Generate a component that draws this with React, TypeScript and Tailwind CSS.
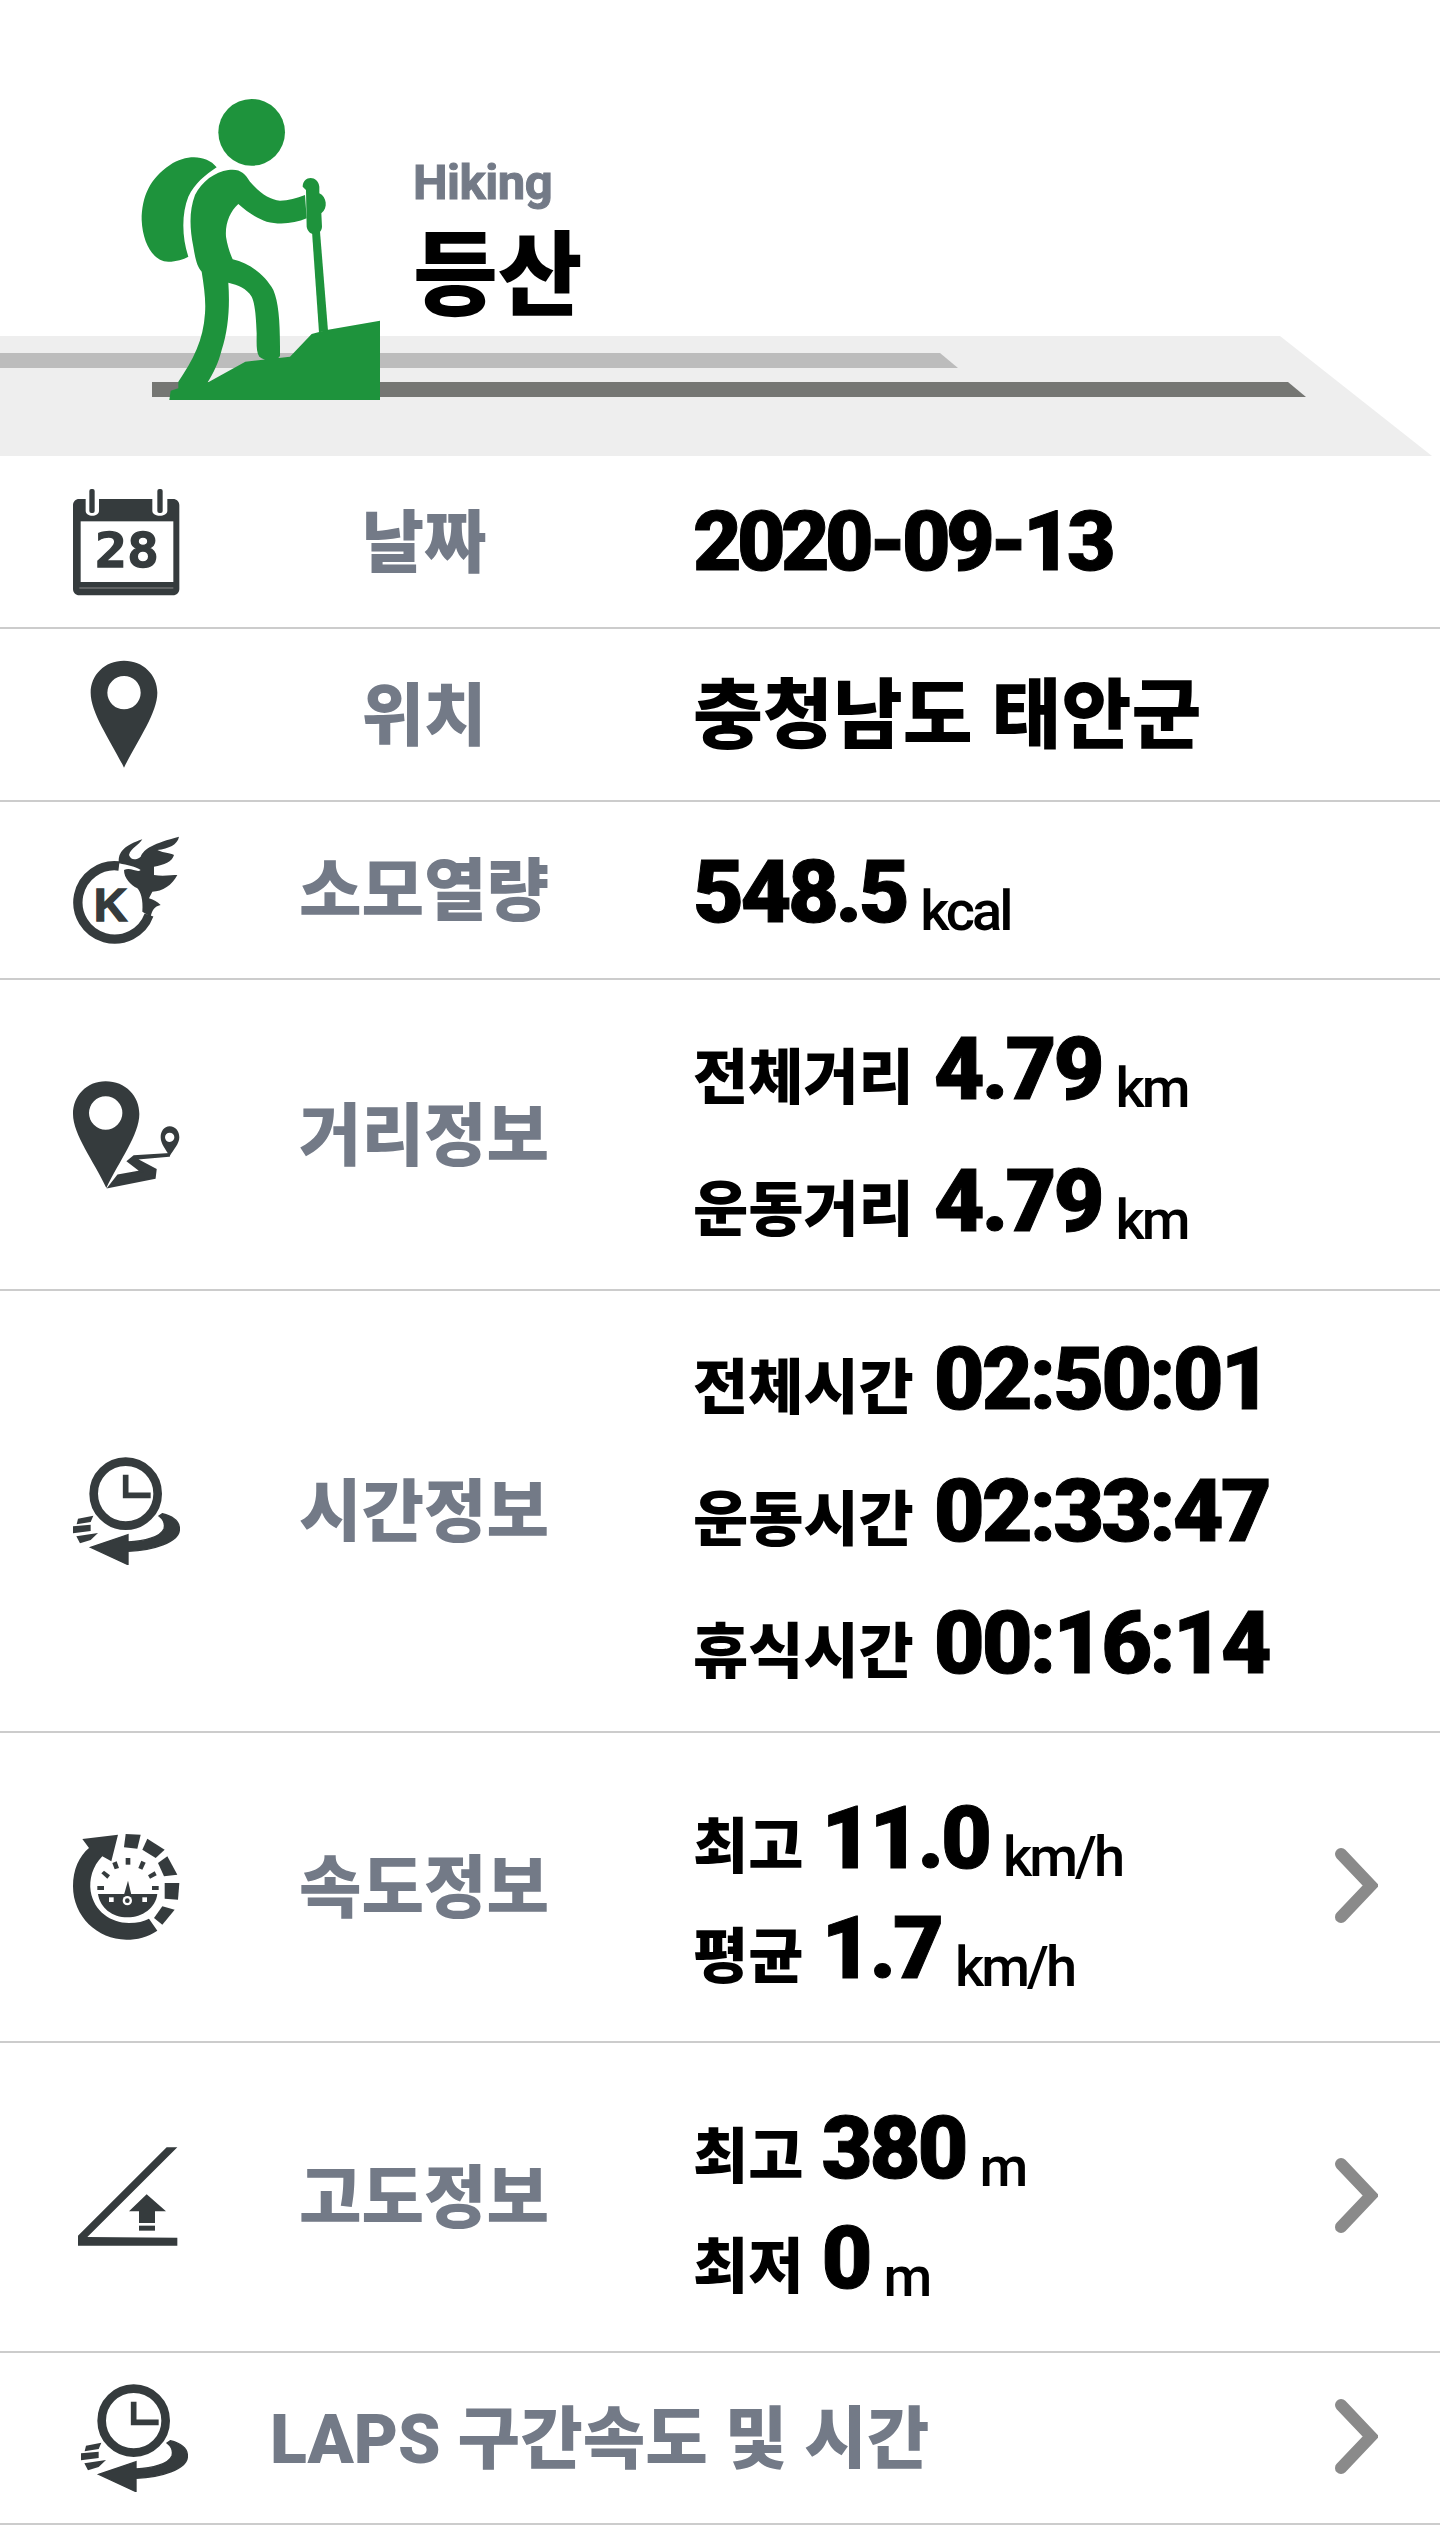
import React from "react";

const FONT = "font-['Roboto','Noto_Sans_CJK_KR',sans-serif]";
const INK = "#353b3d";

function Hiker() {
  return (
    <svg width="280" height="340" viewBox="0 0 840 1020" className="shrink-0 block">
      <g fill="#1e933c">
        <circle cx="455" cy="157" r="100" />
        <path d="M350,262 C320,225 260,222 210,255 C150,295 125,350 125,420 C128,490 160,545 205,545 C230,545 250,538 265,530 C245,470 245,400 265,350 C285,310 315,285 350,262 Z" />
        <path d="M385,270 C420,265 435,280 450,305 C480,340 510,360 540,362 C565,362 590,355 615,345 L620,415 C585,430 540,435 500,425 C470,415 440,395 415,372 C390,395 375,430 378,470 C382,495 390,520 398,538 C450,550 495,585 520,630 C535,665 540,720 540,800 L540,828 C530,845 495,845 478,830 C468,815 470,790 470,760 C468,710 465,670 455,650 C440,625 415,615 385,608 C390,680 385,750 365,810 C355,850 340,880 322,908 L436,845 L570,830 L635,762 L680,750 L840,722 L840,960 L208,960 L212,932 L235,925 L235,905 C280,840 310,780 315,700 C318,660 312,620 305,575 C290,560 285,530 280,500 C268,440 268,390 285,345 C305,305 345,275 385,270 Z" />
        <path d="M636,455 L660,455 L684,752 L657,757 Z" />
        <path d="M608,320 C608,285 655,285 658,320 L658,340 C680,350 685,385 664,400 L666,440 C664,470 625,470 620,440 L618,330 Z" />
      </g>
    </svg>
  );
}

function Band() {
  return (
    <svg width="1440" height="120" viewBox="0 336 1440 120" className="absolute left-0 top-[336px] block">
      <polygon points="0,336 1280,336 1432,456 0,456" fill="#eeeeee" />
      <polygon points="0,353 940,353 958,368 0,368" fill="#bcbcbc" />
      <polygon points="152,382 1288,382 1306,397 152,397" fill="#757673" />
    </svg>
  );
}

function CalendarIcon() {
  return (
    <svg width="108" height="108" viewBox="94 52 324 324" className="block">
      <path d="M115,85 H135 V120 C135,140 175,140 175,120 V85 H335 V120 C335,140 380,140 380,120 V85 H397 C408,85 416,93 416,104 V355 C416,366 408,374 397,374 H116 C105,374 97,366 97,355 V104 C97,93 105,85 115,85 Z" fill={INK} />
      <rect x="146" y="55" width="16" height="72" rx="6" fill={INK} />
      <rect x="350" y="55" width="16" height="72" rx="6" fill={INK} />
      <rect x="120" y="152" width="278" height="182" fill="#fff" />
      <rect x="116" y="350" width="282" height="4" fill="#777" />
      <text x="259" y="290" textAnchor="middle" fontFamily="'DejaVu Sans Mono',monospace" fontWeight="700" fontSize="146" fill={INK} stroke={INK} strokeWidth="4" textLength="192" lengthAdjust="spacingAndGlyphs">28</text>
    </svg>
  );
}

function PinIcon() {
  return (
    <svg width="108" height="110" viewBox="96 570 324 330" className="block">
      <path fillRule="evenodd" d="M252,572 C310,572 352,615 352,668 C352,730 290,815 252,893 C214,815 152,730 152,668 C152,615 194,572 252,572 Z M252,618 A50,50 0 1 0 252.1,718 A50,50 0 1 0 252,618 Z" fill={INK} />
    </svg>
  );
}

function KcalIcon() {
  return (
    <svg width="108" height="108" viewBox="94 48 324 324" className="block">
      <path d="M235,138 A110,110 0 1 0 325,285" fill="none" stroke={INK} strokeWidth="28" />
      <path d="M235,130 C230,95 255,75 305,58 C295,75 270,85 265,105 C270,120 285,122 300,110 C310,85 340,70 415,50 C410,75 385,85 350,90 C370,100 395,100 400,105 C395,125 370,135 340,140 L340,165 C365,170 395,165 410,165 C395,195 365,215 335,215 L325,235 C340,240 350,245 360,255 C340,260 335,270 330,290 L305,275 C308,240 300,215 290,205 C270,195 250,175 250,150 C270,140 290,160 300,150 C285,140 260,135 235,130 Z" fill={INK} />
      <text x="210" y="304" textAnchor="middle" fontFamily="'Liberation Sans',sans-serif" fontWeight="700" fontSize="140" fill={INK} stroke={INK} strokeWidth="4">K</text>
    </svg>
  );
}

function RouteIcon() {
  return (
    <svg width="108" height="110" viewBox="94 776 324 330" className="block">
      <path fillRule="evenodd" d="M195,780 C255,780 296,825 296,878 C296,940 235,1020 197,1100 C160,1020 97,940 97,878 C97,825 137,780 195,780 Z M195,825 A50,50 0 1 0 195.1,925 A50,50 0 1 0 195,825 Z" fill={INK} />
      <path fillRule="evenodd" d="M387,915 C405,915 416,930 416,948 C416,968 398,985 387,1005 C376,985 360,968 360,948 C360,930 370,915 387,915 Z M387,934 A14,14 0 1 0 387.1,962 A14,14 0 1 0 387,934 Z" fill={INK} />
      <path d="M385,1003 L283,1012 L345,1045 L342,1070 L205,1097 L232,1062 L302,1050 L262,1020 L280,1005 L385,998 Z" fill={INK} stroke={INK} strokeWidth="6" />
    </svg>
  );
}

function ClockIcon() {
  return (
    <svg width="108" height="108" viewBox="94 105 324 324" className="block">
      <circle cx="255" cy="215" r="96" fill="none" stroke={INK} strokeWidth="26" />
      <path d="M255,158 V220 H330" fill="none" stroke={INK} strokeWidth="17" />
      <path d="M365,275 C405,285 418,305 416,325 C412,360 340,385 262,388 L262,428 L150,376 L262,338 L262,360 C310,358 360,345 370,320 C374,305 368,292 355,282 Z" fill={INK} stroke={INK} strokeWidth="4" />
      <path d="M112,290 L158,281 L150,300 L108,307 Z M97,313 L150,308 L150,327 L97,334 Z M107,343 L172,333 L150,354 L118,364 Z" fill={INK} />
    </svg>
  );
}

function SpeedIcon() {
  return (
    <svg width="108" height="108" viewBox="94 65 324 324" className="block">
      <g fill={INK}>
        <path d="M125,83 L232,70 L212,150 L185,135 C155,165 145,205 150,240 C160,300 210,335 265,335 C290,335 310,330 325,322 L350,358 C320,378 290,385 257,385 C170,385 97,315 97,225 C97,175 115,135 145,110 Z" />
        <polygon points="255,68 300,70 290,112 250,108" />
        <polygon points="320,82 372,115 345,140 305,115" />
        <polygon points="380,135 410,190 370,195 352,155" />
        <polygon points="372,215 416,215 412,265 372,262" />
        <polygon points="365,285 402,295 365,340 340,320" />
        <path d="M172,248 L350,248 C345,290 305,318 260,318 C215,318 178,290 172,248 Z" />
        <polygon points="262,208 272,250 250,250" />
        <rect x="255" y="140" width="14" height="20" />
        <polygon points="215,155 228,150 235,170 222,174" />
        <polygon points="293,170 302,148 315,154 305,175" />
        <polygon points="182,186 190,178 208,192 200,202" />
        <polygon points="322,192 342,180 348,192 328,202" />
        <rect x="170" y="224" width="20" height="12" />
        <rect x="334" y="224" width="20" height="12" />
      </g>
      <rect x="205" y="258" width="14" height="14" fill="#fff" />
      <rect x="305" y="258" width="14" height="14" fill="#fff" />
      <circle cx="260" cy="268" r="14" fill="#fff" />
      <circle cx="260" cy="268" r="7" fill={INK} />
    </svg>
  );
}

function AltitudeIcon() {
  return (
    <svg width="108" height="108" viewBox="94 100 324 324" className="block">
      <g fill={INK}>
        <polygon points="378,113 410,113 140,382 410,384 410,408 112,408 112,378" />
        <polygon points="318,254 376,305 343,305 343,340 295,340 295,305 265,305" />
        <rect x="295" y="348" width="48" height="15" />
      </g>
    </svg>
  );
}

function Chevron() {
  return (
    <svg width="43" height="75" viewBox="0 0 43 75" className="block">
      <path d="M6,6 L36,37.5 L6,69" fill="none" stroke="#8a8a8a" strokeWidth="12" strokeLinecap="round" strokeLinejoin="miter" />
    </svg>
  );
}

function Row({ h, icon, label, children, arrow }: { h: string; icon: React.ReactNode; label: string; children: React.ReactNode; arrow?: boolean }) {
  return (
    <div className={`flex items-center border-b-2 border-[#cccccc] ${h}`}>
      <div className="w-[180px] pl-[72px] shrink-0">{icon}</div>
      <div className="w-[488px] shrink-0 pt-[4px] text-center text-[68px] font-black text-[#737a87] leading-none">{label}</div>
      <div className="ml-[25px] flex-1 flex flex-col">{children}</div>
      {arrow && <div className="mr-[62px] -mt-[4px] shrink-0"><Chevron /></div>}
    </div>
  );
}

function Line({ k, v, u, h, gap }: { k: string; v: string; u: string; h: string; gap: string }) {
  return (
    <div className={`flex items-baseline ${h}`}>
      <span className="text-[60px] font-black text-black leading-none">{k}</span>
      <span className={`${gap} text-[88px] font-black text-black leading-none tracking-[-3px] [-webkit-text-stroke:1px_black]`}>{v}</span>
      {u && <span className="ml-[14px] translate-y-[8px] text-[56px] font-medium text-black leading-none tracking-[-3px]">{u}</span>}
    </div>
  );
}

export default function App() {
  return (
    <div className={`w-[1440px] h-[2525px] bg-white overflow-hidden ${FONT}`}>
      <div className="relative h-[456px]">
        <Band />
        <div className="relative flex pl-[100px] pt-[80px]">
          <Hiker />
          <div className="ml-[33px] pt-[76px] flex flex-col">
            <span className="text-[49px] font-bold text-[#737a87] leading-[54px] tracking-[-0.5px] [-webkit-text-stroke:1px_#737a87]">Hiking</span>
            <span className="mt-[15px] text-[92px] font-black text-black leading-[104px]">등산</span>
          </div>
        </div>
      </div>

      <Row h="h-[173px]" icon={<CalendarIcon />} label="날짜">
        <span className="text-[84px] font-black text-black leading-none tracking-[-4.7px] [-webkit-text-stroke:1px_black]">2020-09-13</span>
      </Row>
      <Row h="h-[173px]" icon={<PinIcon />} label="위치">
        <span className="pt-[2px] text-[76px] font-black text-black leading-none">충청남도 태안군</span>
      </Row>
      <Row h="h-[178px]" icon={<KcalIcon />} label="소모열량">
        <div className="flex items-baseline pt-[4px]">
          <span className="text-[88px] font-black text-black leading-none tracking-[-3.5px] [-webkit-text-stroke:1px_black]">548.5</span>
          <span className="ml-[14px] translate-y-[8px] text-[56px] font-medium text-black leading-none tracking-[-3px]">kcal</span>
        </div>
      </Row>
      <Row h="h-[311px]" icon={<RouteIcon />} label="거리정보">
        <div className="pt-[12px] flex flex-col">
          <Line k="전체거리" v="4.79" u="km" h="h-[132px]" gap="ml-[20px]" />
          <Line k="운동거리" v="4.79" u="km" h="h-[100px]" gap="ml-[20px]" />
        </div>
      </Row>
      <Row h="h-[442px]" icon={<ClockIcon />} label="시간정보">
        <div className="pt-[12px] flex flex-col">
          <Line k="전체시간" v="02:50:01" u="" h="h-[132px]" gap="ml-[20px]" />
          <Line k="운동시간" v="02:33:47" u="" h="h-[132px]" gap="ml-[20px]" />
          <Line k="휴식시간" v="00:16:14" u="" h="h-[100px]" gap="ml-[20px]" />
        </div>
      </Row>
      <Row h="h-[310px]" icon={<SpeedIcon />} label="속도정보" arrow>
        <div className="pt-[14px] flex flex-col">
          <Line k="최고" v="11.0" u="km/h" h="h-[110px]" gap="ml-[18px]" />
          <Line k="평균" v="1.7" u="km/h" h="h-[90px]" gap="ml-[18px]" />
        </div>
      </Row>
      <Row h="h-[310px]" icon={<AltitudeIcon />} label="고도정보" arrow>
        <div className="pt-[14px] flex flex-col">
          <Line k="최고" v="380" u="m" h="h-[110px]" gap="ml-[18px]" />
          <Line k="최저" v="0" u="m" h="h-[90px]" gap="ml-[18px]" />
        </div>
      </Row>
      <div className="flex items-center border-b-2 border-[#cccccc] h-[172px]">
        <div className="w-[270px] pl-[80px] shrink-0"><ClockIcon /></div>
        <div className="flex-1 pt-[4px] text-[68px] font-black text-[#737a87] leading-none">LAPS 구간속도 및 시간</div>
        <div className="mr-[62px] -mt-[4px] shrink-0"><Chevron /></div>
      </div>
    </div>
  );
}
